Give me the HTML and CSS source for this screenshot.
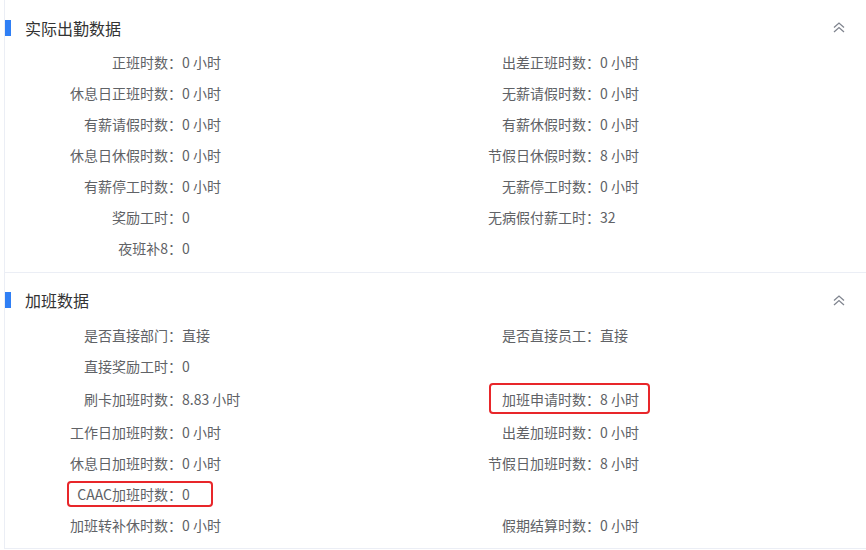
FILE: index.html
```html
<!DOCTYPE HTML>
<html lang="zh-CN">
<head>
  <title>考勤数据</title>
  <meta charset="utf-8">
  <link rel="stylesheet" href="styles.css">
</head>
<body>

<div class="panel">

  <div class="section">
    <div class="section-head">
      <span class="bar"></span>
      <span class="title">实际出勤数据</span>
      <svg class="fold" width="12" height="11" viewBox="0 0 12 11"><path d="M1 5.5 L6 1 L11 5.5 M1 10 L6 5.5 L11 10" fill="none" stroke="#80858f" stroke-width="1.3"/></svg>
    </div>
    <div class="fields">
      <div class="field"><span class="label">正班时数：</span><span class="value">0 小时</span></div>
      <div class="field"><span class="label">出差正班时数：</span><span class="value">0 小时</span></div>
      <div class="field"><span class="label">休息日正班时数：</span><span class="value">0 小时</span></div>
      <div class="field"><span class="label">无薪请假时数：</span><span class="value">0 小时</span></div>
      <div class="field"><span class="label">有薪请假时数：</span><span class="value">0 小时</span></div>
      <div class="field"><span class="label">有薪休假时数：</span><span class="value">0 小时</span></div>
      <div class="field"><span class="label">休息日休假时数：</span><span class="value">0 小时</span></div>
      <div class="field"><span class="label">节假日休假时数：</span><span class="value">8 小时</span></div>
      <div class="field"><span class="label">有薪停工时数：</span><span class="value">0 小时</span></div>
      <div class="field"><span class="label">无薪停工时数：</span><span class="value">0 小时</span></div>
      <div class="field"><span class="label">奖励工时：</span><span class="value">0</span></div>
      <div class="field"><span class="label">无病假付薪工时：</span><span class="value">32</span></div>
      <div class="field"><span class="label">夜班补8：</span><span class="value">0</span></div>
      <div class="field"></div>
    </div>
  </div>

  <div class="section">
    <div class="section-head">
      <span class="bar"></span>
      <span class="title">加班数据</span>
      <svg class="fold" width="12" height="11" viewBox="0 0 12 11"><path d="M1 5.5 L6 1 L11 5.5 M1 10 L6 5.5 L11 10" fill="none" stroke="#80858f" stroke-width="1.3"/></svg>
    </div>
    <div class="fields">
      <div class="field"><span class="label">是否直接部门：</span><span class="value">直接</span></div>
      <div class="field"><span class="label">是否直接员工：</span><span class="value">直接</span></div>
      <div class="field"><span class="label">直接奖励工时：</span><span class="value">0</span></div>
      <div class="field"></div>
      <div class="field tall"><span class="label">刷卡加班时数：</span><span class="value">8.83 小时</span></div>
      <div class="field tall"><span class="label">加班申请时数：</span><span class="value">8 小时</span><span class="mark mark-apply"></span></div>
      <div class="field"><span class="label">工作日加班时数：</span><span class="value">0 小时</span></div>
      <div class="field"><span class="label">出差加班时数：</span><span class="value">0 小时</span></div>
      <div class="field"><span class="label">休息日加班时数：</span><span class="value">0 小时</span></div>
      <div class="field"><span class="label">节假日加班时数：</span><span class="value">8 小时</span></div>
      <div class="field"><span class="label">CAAC加班时数：</span><span class="value">0</span><span class="mark mark-caac"></span></div>
      <div class="field"></div>
      <div class="field"><span class="label">加班转补休时数：</span><span class="value">0 小时</span></div>
      <div class="field"><span class="label">假期结算时数：</span><span class="value">0 小时</span></div>
    </div>
  </div>

</div>

</body>
</html>
```

FILE: styles.css
```css
html {
  height: 100%;
}
body {
  margin: 0;
  padding: 0;
  background: #ffffff;
  color: #606266;
  font-family: "Noto Sans CJK SC", "Liberation Sans", sans-serif;
  font-size: 14px;
  height: 100%;
}

.panel {
  margin-left: 4px;
  border-left: 1px solid #ebeef5;
}

.section {
  border-bottom: 1px solid #ebeef5;
}
.section:first-child {
  padding: 9px 0 9px;
}
.section:first-child .section-head {
  height: 37px;
}
.section + .section {
  padding: 8px 0 8px;
}

.section-head {
  display: flex;
  align-items: center;
  height: 38px;
  padding-right: 21px;
}

.bar {
  width: 6px;
  height: 16px;
  background: #2f7ff5;
}

.title {
  margin-left: 14px;
  font-size: 16px;
  color: #333333;
  flex: 1;
}

.fold {
  display: block;
}

.fields {
  display: grid;
  grid-template-columns: 418px 1fr;
}

.field {
  position: relative;
  display: flex;
  align-items: center;
  height: 31px;
  white-space: nowrap;
}
.field.tall {
  height: 35px;
}

.label {
  width: 177px;
  text-align: right;
}

.mark {
  position: absolute;
  border: 2px solid #e8262a;
  border-radius: 4px;
  box-sizing: border-box;
}
.mark-apply {
  left: 66px;
  top: 2px;
  width: 161px;
  height: 31px;
}
.mark-caac {
  left: 62px;
  top: 3px;
  width: 146px;
  height: 26px;
}
```
